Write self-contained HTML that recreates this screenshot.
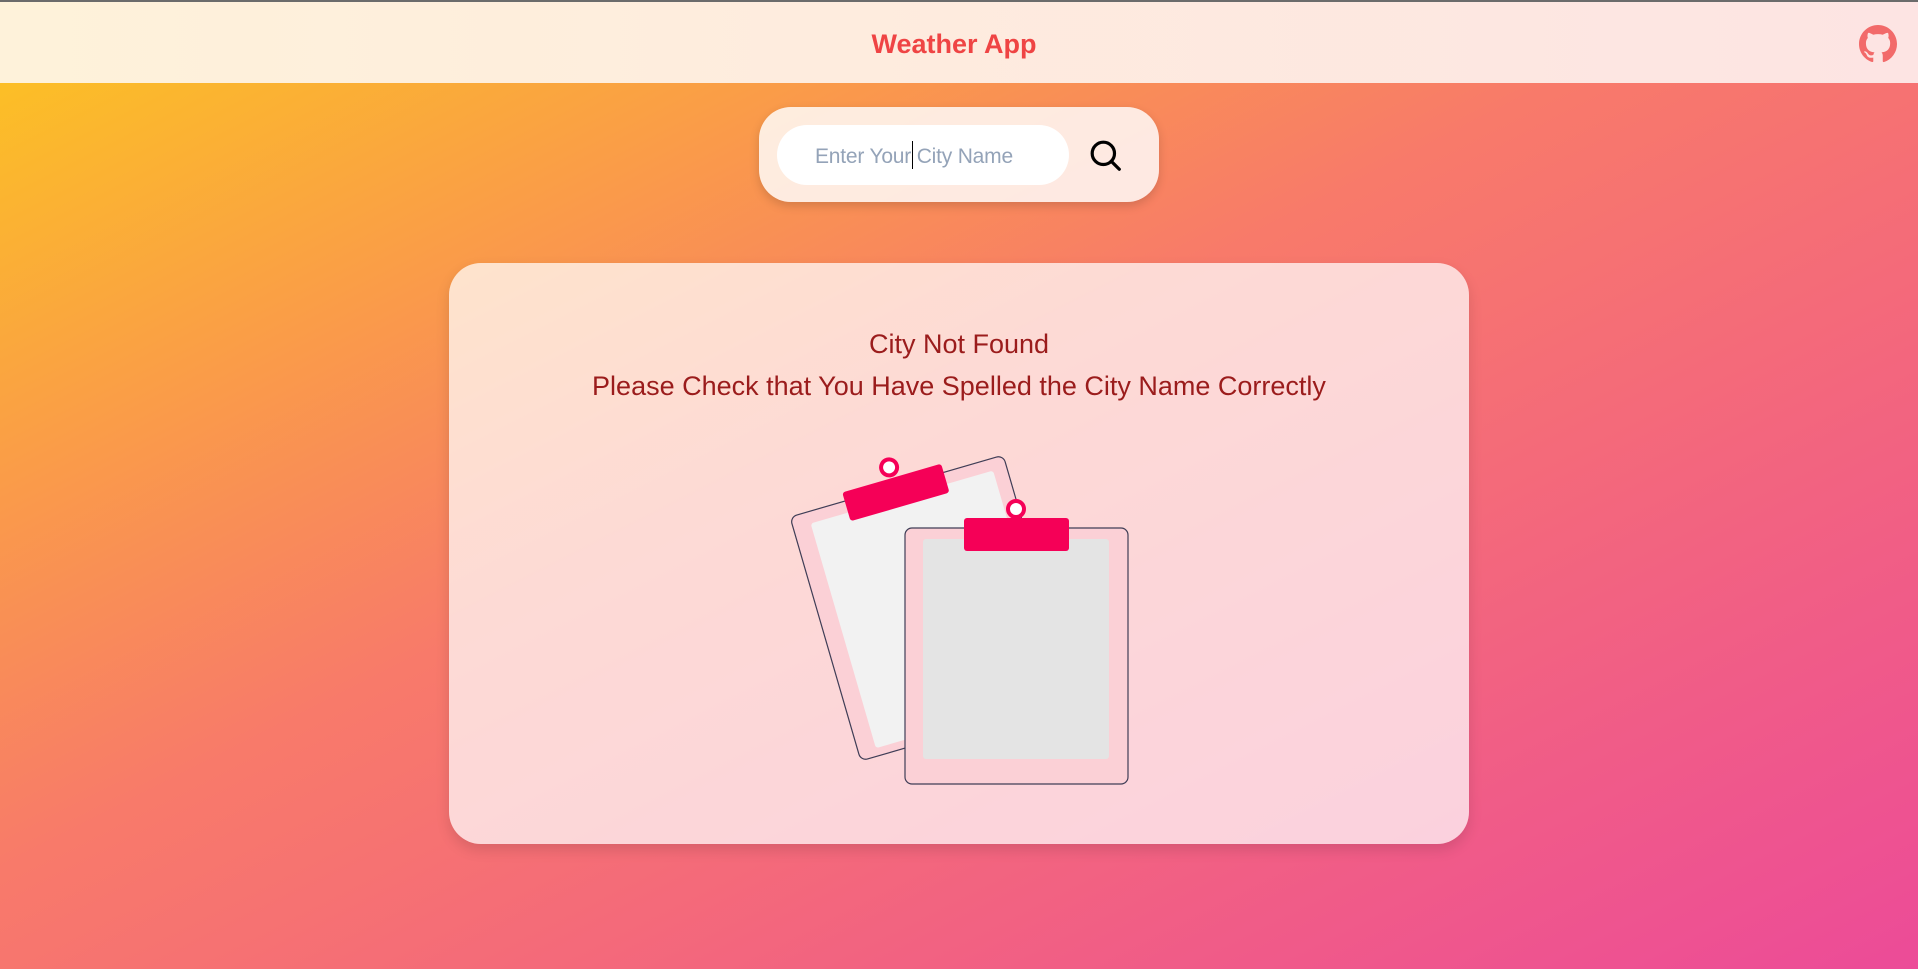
<!DOCTYPE html>
<html><head><meta charset="utf-8"><style>
html,body{margin:0;padding:0;width:1918px;height:969px;overflow:hidden}
body{background:linear-gradient(to bottom right,#fcc61f 0%,#f87a6a 45%,#ec4b98 100%);font-family:"Liberation Sans",sans-serif;position:relative}
.top{position:absolute;left:0;top:0;width:1918px;height:2px;background:#6b6b6b}
.hdr{position:absolute;left:0;top:2px;width:1918px;height:81px;background:linear-gradient(to right,#fef2da,#fde4e3)}
.title{position:absolute;left:0;width:1908px;top:27px;text-align:center;font-size:27px;font-weight:bold;color:#ef4444}
.gh{position:absolute;left:1859px;top:23px}
.sb{position:absolute;left:759px;top:107px;width:400px;height:95px;border-radius:32px;background:rgba(255,255,255,0.82);box-shadow:0 4px 10px rgba(0,0,0,0.15)}
.inp{position:absolute;left:18px;top:18px;width:292px;height:60px;border-radius:30px;background:#fff}
.ph{position:absolute;left:38px;top:20px;font-size:21px;color:#94a3b8;letter-spacing:-0.2px}
.cur{position:absolute;left:135px;top:16px;width:1px;height:28px;background:#000}
.card{position:absolute;left:449px;top:263px;width:1020px;height:581px;border-radius:32px;background:rgba(255,255,255,0.72);box-shadow:0 6px 14px rgba(0,0,0,0.12)}
.msg{position:absolute;left:0;width:1020px;text-align:center;color:#9b1c1c;font-size:27px}
</style></head><body>
<div class="top"></div>
<div class="hdr"><div class="title">Weather App</div>
<svg class="gh" width="38" height="38" viewBox="0 0 16 16"><path fill="#f26a6a" d="M8 0C3.580 0 0 3.58 0 8c0 3.54 2.29 6.53 5.47 7.590.4.07.55-.17.55-.38 0-.19-.01-.82-.01-1.49-2.01.37-2.530-.49-2.69-.94-.09-.23-.48-.94-.82-1.13-.28-.15-.68-.52-.01-.53.63-.01 1.080.58 1.23.82.72 1.21 1.87.87 2.33.66.07-.52.28-.87.51-1.07-1.78-.2-3.64-.89-3.64-3.95 0-.87.31-1.59.82-2.15-.08-.2-.36-1.02.08-2.12 0 0 .67-.21 2.2.82.64-.18 1.32-.27 2-.27.68 0 1.36.09 2 .27 1.53-1.04 2.2-.82 2.2-.82.44 1.1.16 1.92.08 2.12.51.56.82 1.27.82 2.15 0 3.07-1.87 3.75-3.65 3.95.29.25.54.73.54 1.48 0 1.07-.01 1.93-.01 2.2 0 .21.15.46.55.38A8.013 8.013 0 0016 8c0-4.42-3.58-8-8-8z"/></svg>
</div>
<div class="sb"><div class="inp"><div class="ph">Enter Your City Name</div><div class="cur"></div></div>
<svg style="position:absolute;left:330px;top:32px" width="34" height="34" viewBox="0 0 32 32"><circle cx="13.5" cy="13.5" r="10.5" fill="none" stroke="#000" stroke-width="3"/><line x1="21" y1="21" x2="28.5" y2="28.5" stroke="#000" stroke-width="3" stroke-linecap="round"/></svg>
</div>
<div class="card">
<div class="msg" style="top:66px">City Not Found</div>
<div class="msg" style="top:108px">Please Check that You Have Spelled the City Name Correctly</div>
</div>
<svg style="position:absolute;left:0;top:0" width="1918" height="969">
<g transform="translate(790,517) rotate(-16.2)">
<rect x="0" y="0" width="222" height="254" rx="7" fill="#fbd0d6" stroke="#3f3d56" stroke-width="1.2"/>
<rect x="18" y="12" width="190" height="234" rx="3" fill="#f2f2f2"/>
<rect x="57" y="-9" width="103" height="30" rx="3" fill="#f50057"/>
<circle cx="109" cy="-20" r="8" fill="#fff" stroke="#f50057" stroke-width="4"/>
</g>
<rect x="905" y="528" width="223" height="256" rx="7" fill="#fbd0d6" stroke="#3f3d56" stroke-width="1.2"/>
<rect x="923" y="539" width="186" height="220" rx="3" fill="#e4e4e4"/>
<rect x="964" y="518" width="105" height="33" rx="3" fill="#f50057"/>
<circle cx="1016" cy="509" r="8" fill="#fff" stroke="#f50057" stroke-width="4"/>
</svg>
</body></html>
